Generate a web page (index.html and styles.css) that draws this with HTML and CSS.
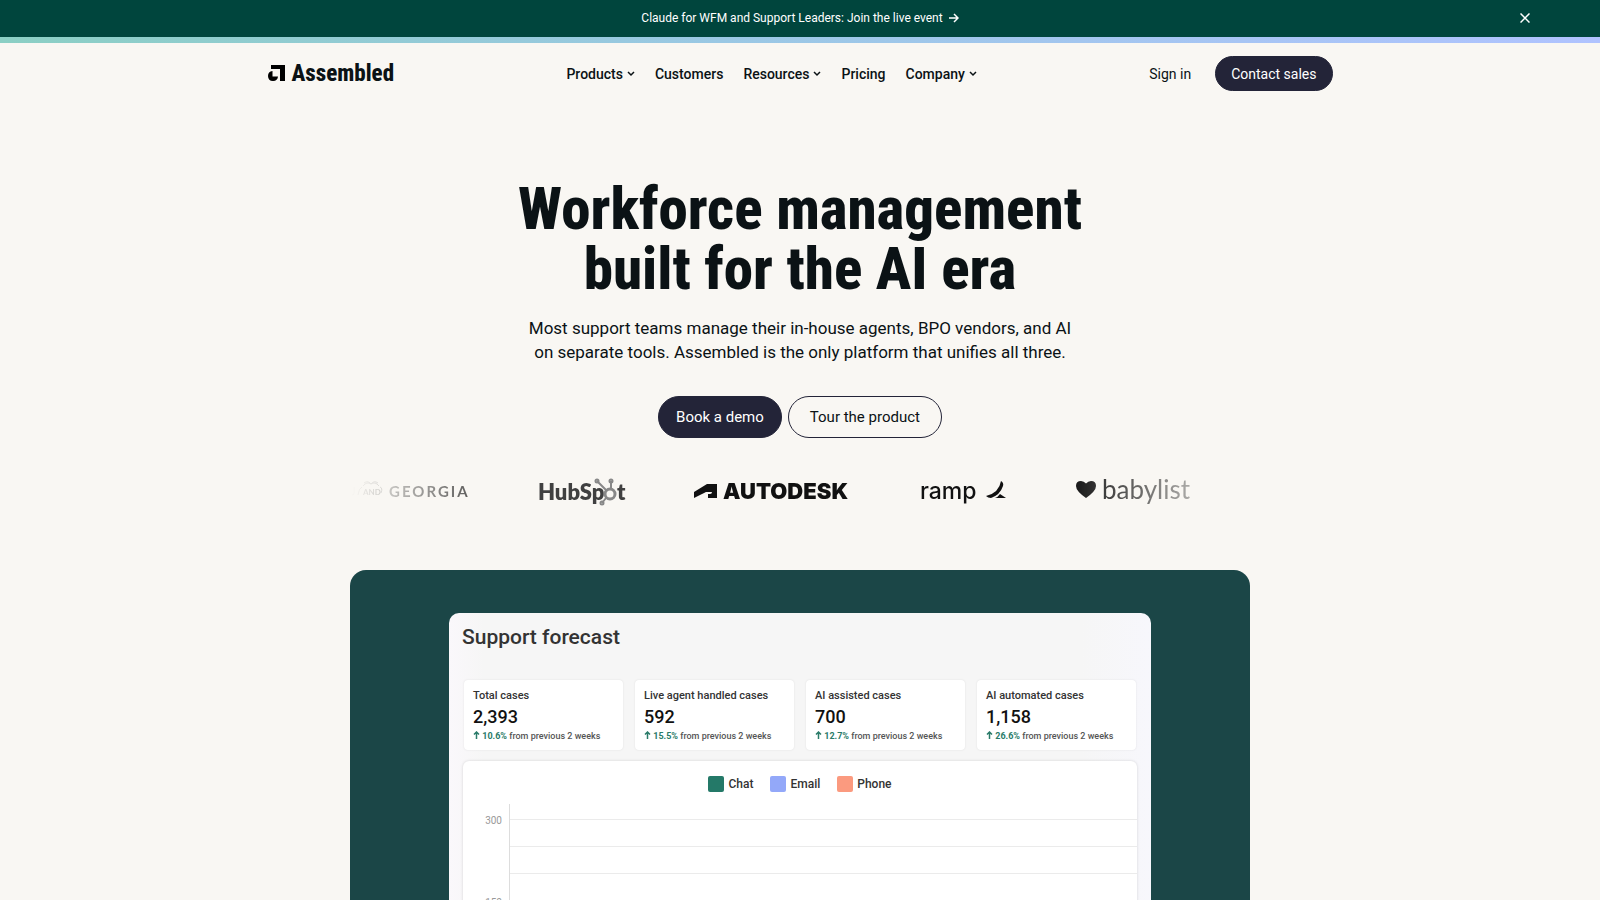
FILE: index.html
```html
<!DOCTYPE html>
<html lang="en">
<head>
  <meta charset="UTF-8">
  <meta name="viewport" content="width=device-width, initial-scale=1.0">
  <title>Assembled</title>
  <link rel="stylesheet" href="styles.css">
</head>
<body>
  <div class="banner">
    <a href="#" class="banner-link">Claude for WFM and Support Leaders: Join the live event
      <svg width="10" height="10" viewBox="0 0 10 10"><path d="M0 5h9M5 1l4 4-4 4"/></svg>
    </a>
    <button type="button" class="banner-close" aria-label="Close">
      <svg width="10" height="10" viewBox="0 0 10 10"><path d="M0.500 0.500l9 9M9.500 0.500l-9 9"/></svg>
    </button>
  </div>

  <header class="header">
    <a href="#" class="logo">
      <svg width="17" height="17" viewBox="0 0 17 17">
        <path d="M3 0h14v16h-5V4H3z"/>
        <path d="M4.500 6v5.500H10A5 5 0 1 1 4.500 6z"/>
      </svg>
      Assembled
    </a>
    <nav class="nav">
      <a href="#">Products <svg width="8" height="6" viewBox="0 0 8 6"><path d="M1 1l3 3 3-3"/></svg></a>
      <a href="#">Customers</a>
      <a href="#">Resources <svg width="8" height="6" viewBox="0 0 8 6"><path d="M1 1l3 3 3-3"/></svg></a>
      <a href="#">Pricing</a>
      <a href="#">Company <svg width="8" height="6" viewBox="0 0 8 6"><path d="M1 1l3 3 3-3"/></svg></a>
    </nav>
    <div class="header-actions">
      <a href="#" class="sign-in">Sign in</a>
      <button type="button" class="btn btn-small">Contact sales</button>
    </div>
  </header>

  <main>
    <section class="hero">
      <h1>Workforce management<br>built for the AI era</h1>
      <p>Most support teams manage their in-house agents, BPO vendors, and AI<br>on separate tools. Assembled is the only platform that unifies all three.</p>
      <div class="hero-buttons">
        <button type="button" class="btn">Book a demo</button>
        <button type="button" class="btn btn-outline">Tour the product</button>
      </div>
    </section>

    <section class="logos">
      <svg width="120" height="34" viewBox="0 0 120 34">
        <path class="thin" d="M4 13v6q0 2-2 2M8 21q1-7 4-8M13 12q4-5 8-2q4-3 8 2M14 9q4-3 7 1q3-4 7-1M30 13q3 1 1 6"/>
        <text x="13" y="21" class="and">AND</text>
        <text x="39" y="23" class="georgia">GEORGIA</text>
      </svg>
      <svg width="88" height="34" viewBox="0 0 88 34">
        <text x="0" y="26" class="hubspot">HubSp</text>
        <text x="79" y="26" class="hubspot">t</text>
        <g class="sprocket">
          <circle cx="72" cy="20" r="5"/>
          <path d="M68 16L59 7M73 14V7M68 24l-4 5"/>
          <circle class="dot" cx="59" cy="7" r="1"/>
          <circle class="dot" cx="73" cy="7" r="1"/>
          <circle class="dot" cx="64" cy="29" r="1"/>
        </g>
      </svg>
      <svg width="158" height="34" viewBox="0 0 158 34">
        <path d="M0 18L13 10H23V24H14V20H16Q18 20 18 18H12L0 24z"/>
        <text x="29" y="25" class="autodesk">AUTODESK</text>
      </svg>
      <svg width="88" height="34" viewBox="0 0 88 34">
        <text x="0" y="25" class="ramp">ramp</text>
        <path d="M81 7q3 2 2 5q-3 9-12 12q-3 0-5-2q13-3 15-15zM75 24q3-1 5-4l6 4z"/>
      </svg>
      <svg width="124" height="34" viewBox="0 0 124 34">
        <path d="M10 24Q0 17 0 12Q0 7 5 7Q8 7 10 9.500Q12 7 15 7Q20 7 20 12Q20 17 10 24z"/>
        <text x="26" y="25" class="babylist">babylist</text>
      </svg>
    </section>

    <section class="showcase">
      <div class="forecast">
        <h2>Support forecast</h2>
        <div class="stats">
          <div class="stat">
            <h3>Total cases</h3>
            <strong>2,393</strong>
            <p><svg width="7" height="8" viewBox="0 0 7 8"><path d="M3.500 8V1M1 3.500L3.500 1 6 3.500"/></svg> <b>10.6%</b> from previous 2 weeks</p>
          </div>
          <div class="stat">
            <h3>Live agent handled cases</h3>
            <strong>592</strong>
            <p><svg width="7" height="8" viewBox="0 0 7 8"><path d="M3.500 8V1M1 3.500L3.500 1 6 3.500"/></svg> <b>15.5%</b> from previous 2 weeks</p>
          </div>
          <div class="stat">
            <h3>AI assisted cases</h3>
            <strong>700</strong>
            <p><svg width="7" height="8" viewBox="0 0 7 8"><path d="M3.500 8V1M1 3.500L3.500 1 6 3.500"/></svg> <b>12.7%</b> from previous 2 weeks</p>
          </div>
          <div class="stat">
            <h3>AI automated cases</h3>
            <strong>1,158</strong>
            <p><svg width="7" height="8" viewBox="0 0 7 8"><path d="M3.500 8V1M1 3.500L3.500 1 6 3.500"/></svg> <b>26.6%</b> from previous 2 weeks</p>
          </div>
        </div>
        <div class="chart">
          <ul class="legend">
            <li class="chat">Chat</li>
            <li class="email">Email</li>
            <li class="phone">Phone</li>
          </ul>
          <div class="plot">
            <div class="labels">
              <span>300</span>
              <span>150</span>
              <span>0</span>
            </div>
            <div class="grid">
              <i></i><i></i><i></i><i></i><i></i><i></i><i></i>
            </div>
          </div>
        </div>
      </div>
    </section>
  </main>
</body>
</html>
```
FILE: styles.css
```css
* {
  box-sizing: border-box;
}
body {
  margin: 0;
  background-color: #f9f7f3;
  color: #0b1215;
  font-family: Roboto, "Liberation Sans", sans-serif;
}
a {
  color: inherit;
  text-decoration: none;
}
h1, h2, h3, p, ul {
  margin: 0;
  padding: 0;
}
button {
  font-family: inherit;
  cursor: pointer;
}

/* top banner */
.banner {
  position: relative;
  display: flex;
  justify-content: center;
  align-items: center;
  height: 43px;
  padding-bottom: 1px;
  background-color: #00453d;
  border-bottom: 6px solid;
  border-image: linear-gradient(to right, #8bcfc4, #9ac8e4 45%, #b0c3ff) 1;
  color: #ffffff;
  font-size: 12px;
}
.banner svg, .nav svg, .stat svg {
  fill: none;
  stroke: currentColor;
  stroke-width: 1.5;
}
.banner-link {
  display: flex;
  align-items: center;
  gap: 6px;
}
.banner-close {
  position: absolute;
  right: 70px;
  display: flex;
  padding: 0;
  border: none;
  background: none;
  color: #ffffff;
}

/* header */
.header {
  display: flex;
  justify-content: space-between;
  align-items: center;
  max-width: 1065px;
  margin: 0 auto;
  padding: 13px 0;
}
.logo {
  display: flex;
  align-items: center;
  gap: 7px;
  font-family: "Roboto Condensed", Roboto, sans-serif;
  font-size: 23px;
  line-height: 24px;
  font-weight: 800;
}
.nav {
  display: flex;
  gap: 20px;
  font-size: 14px;
  font-weight: 500;
}
.nav a {
  display: flex;
  align-items: center;
  gap: 4px;
}
.header-actions {
  display: flex;
  align-items: center;
  gap: 24px;
  font-size: 14px;
}
.btn {
  height: 42px;
  padding: 0 17px;
  border: 1px solid #232438;
  border-radius: 21px;
  background-color: #232438;
  color: #ffffff;
  font-size: 15px;
}
.btn-small {
  height: 35px;
  padding: 0 15px;
  font-size: 14px;
}
.btn-outline {
  padding: 0 21px;
  background-color: transparent;
  color: #0b1215;
}

/* hero */
.hero {
  padding: 75px 20px 32px;
  text-align: center;
}
.hero h1 {
  font-family: "Roboto Condensed", Roboto, sans-serif;
  font-size: 59px;
  line-height: 60px;
  font-weight: 800;
}
.hero p {
  margin: 17px 0 32px;
  font-size: 17px;
  line-height: 24px;
}
.hero-buttons {
  display: flex;
  justify-content: center;
  gap: 6px;
}

/* customer logos */
.logos {
  display: flex;
  align-items: center;
  gap: 68px;
  max-width: 900px;
  height: 42px;
  margin: 0 auto;
  overflow: hidden;
  -webkit-mask-image: linear-gradient(to right, transparent, #000 20%, #000 80%, transparent);
  mask-image: linear-gradient(to right, transparent, #000 20%, #000 80%, transparent);
}
.logos svg {
  flex: none;
  fill: #111111;
}
.logos .thin {
  fill: none;
  stroke: #555555;
}
.and {
  font: 700 8px Lato, sans-serif;
}
.georgia {
  font: 700 15px Lato, sans-serif;
  letter-spacing: 2px;
}
.logos .hubspot {
  font: 800 22px Lato, sans-serif;
  fill: #404040;
}
.sprocket {
  fill: none;
  stroke: #888888;
  stroke-width: 3;
}
.sprocket path {
  stroke-width: 2;
}
.autodesk {
  font: 900 22px Inter, sans-serif;
}
.ramp {
  font: 500 23px Inter, sans-serif;
}
.babylist {
  font: 400 26px Lato, sans-serif;
}

/* product panel */
.showcase {
  max-width: 900px;
  margin: 58px auto 0;
  padding: 43px 99px;
  border-radius: 16px;
  background-color: #1b4647;
}
.forecast {
  padding: 12px 13px 16px;
  border-radius: 10px;
  background: linear-gradient(to right, #faf8fb, #f6f6f6 5%, #f6f6f6 90%, #f7f7fc);
  color: #333333;
}
.forecast h2 {
  font-size: 21px;
  line-height: 24px;
  font-weight: 500;
}
.stats {
  display: grid;
  grid-template-columns: repeat(4, 1fr);
  gap: 12px;
  margin: 31px 2px 11px;
}
.stat {
  height: 70px;
  padding: 9px;
  border-radius: 4px;
  background-color: #ffffff;
  box-shadow: 0 0 2px rgba(0, 0, 0, 0.1);
  white-space: nowrap;
}
.stat h3 {
  font-size: 11px;
  line-height: 14px;
  font-weight: 500;
}
.stat strong {
  display: block;
  color: #111111;
  font-size: 18px;
  line-height: 28px;
  font-weight: 500;
}
.stat p {
  color: #555555;
  font-size: 9px;
  line-height: 10px;
  font-weight: 500;
}
.stat b, .stat svg {
  color: #2a7b69;
}
.chart {
  margin: 0 1px;
  padding-top: 15px;
  border-radius: 6px;
  background-color: #ffffff;
  box-shadow: 0 0 3px rgba(0, 0, 0, 0.15);
}
.legend {
  display: flex;
  justify-content: center;
  gap: 17px;
  list-style: none;
  font-size: 12px;
  line-height: 16px;
  font-weight: 500;
}
.legend li {
  display: flex;
  gap: 4px;
}
.legend li::before {
  content: "";
  width: 16px;
  height: 16px;
  border-radius: 2px;
}
.chat::before {
  background-color: #247968;
}
.email::before {
  background-color: #93a8f9;
}
.phone::before {
  background-color: #fb9a7f;
}
.plot {
  display: flex;
  margin-top: 12px;
}
.labels {
  display: flex;
  flex-direction: column;
  gap: 66px;
  width: 46px;
  padding: 9px 7px 0 0;
  color: #999999;
  font-size: 10px;
  line-height: 16px;
  text-align: right;
}
.grid {
  flex: 1;
  padding-top: 15px;
  border-left: 1px solid #dddddd;
}
.grid i {
  display: block;
  height: 27px;
  border-top: 1px solid #ebebeb;
}
```
